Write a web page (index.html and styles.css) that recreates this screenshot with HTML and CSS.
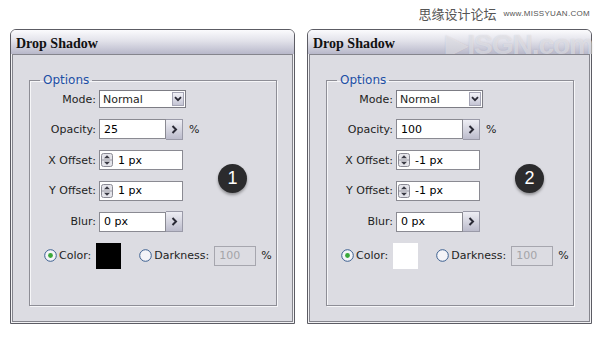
FILE: index.html
```html
<!DOCTYPE html>
<html lang="en">
<head>
    <meta charset="UTF-8">
    <title>Drop Shadow</title>
    <link rel="stylesheet" href="styles.css">
</head>
<body>
    <div class="site-mark">
        <span class="site-cn">思缘设计论坛</span>
        <span class="site-url">www.MISSYUAN.COM</span>
    </div>

    <div class="panels">
        <!-- panel 1 -->
        <div class="panel">
            <div class="title-bar">Drop Shadow</div>
            <div class="panel-body">
                <fieldset class="options">
                    <legend>Options</legend>
                    <div class="form-grid">
                        <span class="field-label">Mode:</span>
                        <div class="select">
                            <span class="select-value">Normal</span>
                            <span class="drop-btn">
                                <svg width="8" height="6" viewBox="0 0 8 6"><path d="M1 1.2 L4 4.2 L7 1.2" fill="none" stroke="#2a2a35" stroke-width="1.8"/></svg>
                            </span>
                        </div>

                        <span class="field-label">Opacity:</span>
                        <div class="field-line">
                            <div class="text-box short">25</div>
                            <span class="arrow-btn">
                                <svg width="7" height="9" viewBox="0 0 7 9"><path d="M1.5 1 L5 4.5 L1.5 8" fill="none" stroke="#2a2a35" stroke-width="2"/></svg>
                            </span>
                            <span class="unit">%</span>
                        </div>

                        <span class="field-label">X Offset:</span>
                        <div class="text-box wide">
                            <svg class="spinner" width="12" height="14" viewBox="0 0 12 14"><rect x="0.5" y="0.5" width="11" height="13" rx="2" fill="#e4e4ea" stroke="#8a8a94"/><line x1="1" y1="7" x2="11" y2="7" stroke="#9a9aa4"/><path d="M3 5.2 L6 2.2 L9 5.2 Z M3 8.8 L6 11.8 L9 8.8 Z" fill="#3a3a44"/></svg>
                            1 px
                        </div>

                        <span class="field-label">Y Offset:</span>
                        <div class="text-box wide">
                            <svg class="spinner" width="12" height="14" viewBox="0 0 12 14"><rect x="0.5" y="0.5" width="11" height="13" rx="2" fill="#e4e4ea" stroke="#8a8a94"/><line x1="1" y1="7" x2="11" y2="7" stroke="#9a9aa4"/><path d="M3 5.2 L6 2.2 L9 5.2 Z M3 8.8 L6 11.8 L9 8.8 Z" fill="#3a3a44"/></svg>
                            1 px
                        </div>

                        <span class="field-label">Blur:</span>
                        <div class="field-line">
                            <div class="text-box short">0 px</div>
                            <span class="arrow-btn">
                                <svg width="7" height="9" viewBox="0 0 7 9"><path d="M1.5 1 L5 4.5 L1.5 8" fill="none" stroke="#2a2a35" stroke-width="2"/></svg>
                            </span>
                        </div>

                        <div class="color-row">
                            <svg class="radio" width="13" height="13" viewBox="0 0 13 13"><circle cx="6.5" cy="6.5" r="5.8" fill="#f4f4f8" stroke="#3b5f8f"/><circle cx="6.5" cy="6.5" r="2.4" fill="#3aa83a"/></svg>
                            <span class="radio-label">Color:</span>
                            <span class="swatch black"></span>
                            <svg class="radio" width="13" height="13" viewBox="0 0 13 13"><circle cx="6.5" cy="6.5" r="5.8" fill="#f4f4f8" stroke="#3b5f8f"/></svg>
                            <span class="radio-label">Darkness:</span>
                            <div class="text-box disabled">100</div>
                            <span class="unit">%</span>
                        </div>
                    </div>
                </fieldset>
                <div class="badge">1</div>
            </div>
        </div>

        <!-- panel 2 -->
        <div class="panel">
            <div class="title-bar">Drop Shadow</div>
            <div class="watermark">▶ISGN.com</div>
            <div class="panel-body">
                <fieldset class="options">
                    <legend>Options</legend>
                    <div class="form-grid">
                        <span class="field-label">Mode:</span>
                        <div class="select">
                            <span class="select-value">Normal</span>
                            <span class="drop-btn">
                                <svg width="8" height="6" viewBox="0 0 8 6"><path d="M1 1.2 L4 4.2 L7 1.2" fill="none" stroke="#2a2a35" stroke-width="1.8"/></svg>
                            </span>
                        </div>

                        <span class="field-label">Opacity:</span>
                        <div class="field-line">
                            <div class="text-box short">100</div>
                            <span class="arrow-btn">
                                <svg width="7" height="9" viewBox="0 0 7 9"><path d="M1.5 1 L5 4.5 L1.5 8" fill="none" stroke="#2a2a35" stroke-width="2"/></svg>
                            </span>
                            <span class="unit">%</span>
                        </div>

                        <span class="field-label">X Offset:</span>
                        <div class="text-box wide">
                            <svg class="spinner" width="12" height="14" viewBox="0 0 12 14"><rect x="0.5" y="0.5" width="11" height="13" rx="2" fill="#e4e4ea" stroke="#8a8a94"/><line x1="1" y1="7" x2="11" y2="7" stroke="#9a9aa4"/><path d="M3 5.2 L6 2.2 L9 5.2 Z M3 8.8 L6 11.8 L9 8.8 Z" fill="#3a3a44"/></svg>
                            -1 px
                        </div>

                        <span class="field-label">Y Offset:</span>
                        <div class="text-box wide">
                            <svg class="spinner" width="12" height="14" viewBox="0 0 12 14"><rect x="0.5" y="0.5" width="11" height="13" rx="2" fill="#e4e4ea" stroke="#8a8a94"/><line x1="1" y1="7" x2="11" y2="7" stroke="#9a9aa4"/><path d="M3 5.2 L6 2.2 L9 5.2 Z M3 8.8 L6 11.8 L9 8.8 Z" fill="#3a3a44"/></svg>
                            -1 px
                        </div>

                        <span class="field-label">Blur:</span>
                        <div class="field-line">
                            <div class="text-box short">0 px</div>
                            <span class="arrow-btn">
                                <svg width="7" height="9" viewBox="0 0 7 9"><path d="M1.5 1 L5 4.5 L1.5 8" fill="none" stroke="#2a2a35" stroke-width="2"/></svg>
                            </span>
                        </div>

                        <div class="color-row">
                            <svg class="radio" width="13" height="13" viewBox="0 0 13 13"><circle cx="6.5" cy="6.5" r="5.8" fill="#f4f4f8" stroke="#3b5f8f"/><circle cx="6.5" cy="6.5" r="2.4" fill="#3aa83a"/></svg>
                            <span class="radio-label">Color:</span>
                            <span class="swatch white"></span>
                            <svg class="radio" width="13" height="13" viewBox="0 0 13 13"><circle cx="6.5" cy="6.5" r="5.8" fill="#f4f4f8" stroke="#3b5f8f"/></svg>
                            <span class="radio-label">Darkness:</span>
                            <div class="text-box disabled">100</div>
                            <span class="unit">%</span>
                        </div>
                    </div>
                </fieldset>
                <div class="badge">2</div>
            </div>
        </div>
    </div>
</body>
</html>
```

FILE: styles.css
```css
* {
    margin: 0;
    padding: 0;
    box-sizing: border-box;
}

body {
    width: 600px;
    height: 350px;
    background: #fff;
    font-family: 'DejaVu Sans', 'Liberation Sans', sans-serif;
    font-size: 11px;
    color: #1e1e22;
    overflow: hidden;
}

/* top-right site mark */
.site-mark {
    height: 29px;
    display: flex;
    justify-content: flex-end;
    align-items: center;
    gap: 7px;
    padding: 0 10px 2px 0;
    color: #555;
}

.site-cn {
    font-family: 'Noto Sans CJK SC', sans-serif;
    font-size: 13px;
}

.site-url {
    font-family: 'Liberation Sans', sans-serif;
    font-size: 8px;
    letter-spacing: 0.3px;
}

.panels {
    display: flex;
    gap: 12px;
    padding-left: 10px;
}

.panel {
    position: relative;
    width: 285px;
    height: 295px;
    display: flex;
    flex-direction: column;
    border: 1px solid #5c5c64;
    border-radius: 6px 6px 0 0;
    background: #f2f2f4;
}

.title-bar {
    height: 24px;
    padding: 7px 0 0 5px;
    line-height: 14px;
    border-radius: 5px 5px 0 0;
    background: linear-gradient(to bottom, #fbfbfd 0%, #e2e2ea 45%, #b8b8ca 100%);
    font-family: 'Liberation Serif', serif;
    font-weight: bold;
    font-size: 14px;
    color: #111;
}

.watermark {
    position: absolute;
    top: -2px;
    right: -2px;
    font-family: 'Liberation Sans', sans-serif;
    font-weight: bold;
    font-size: 28px;
    letter-spacing: -1px;
    color: rgba(255, 255, 255, 0.45);
    text-shadow: 0 0 1px rgba(120, 120, 140, 0.3);
}

.panel-body {
    position: relative;
    flex: 1;
    display: flex;
    flex-direction: column;
    margin: 0 1px 1px;
    padding: 18px 15px 15px 16px;
    border: 1px solid #85858d;
    background: #dcdce2;
}

.options {
    flex: 1;
    border: 1px solid #8e8e96;
    box-shadow: 1px 1px 0 #f6f6f8, inset 1px 1px 0 #f6f6f8;
    padding: 3px 0 0;
}

.options legend {
    margin-left: 10px;
    padding: 0 3px;
    line-height: 14px;
    font-size: 12px;
    color: #1d4fa6;
}

.form-grid {
    display: grid;
    grid-template-columns: 66px 1fr;
    column-gap: 3px;
    row-gap: 10.6px;
    align-items: center;
}

.field-label {
    text-align: right;
    white-space: nowrap;
}

.field-line {
    display: flex;
    align-items: center;
}

.select {
    width: 87px;
    height: 18px;
    display: flex;
    align-items: center;
    justify-content: space-between;
    border: 1px solid #7c7c84;
    background: #fff;
    padding: 1px 1px 1px 3px;
}

.drop-btn {
    width: 12px;
    height: 14px;
    display: flex;
    align-items: center;
    justify-content: center;
    border: 1px solid #a4a4b4;
    background: linear-gradient(to bottom, #f2f2f8, #c4c4d4);
}

.text-box {
    height: 20px;
    display: flex;
    align-items: center;
    gap: 5px;
    padding-left: 4px;
    border: 1px solid #8a8a92;
    background: #fff;
    color: #000;
    white-space: nowrap;
}

.text-box.short {
    width: 67px;
}

.text-box.wide {
    width: 84px;
    padding-left: 1px;
}

.text-box.disabled {
    width: 42px;
    border-color: #a6a6ae;
    background: #dcdce2;
    color: #a4a4a8;
}

.arrow-btn {
    width: 17px;
    height: 21px;
    display: flex;
    align-items: center;
    justify-content: center;
    border: 1px solid #9a9aa8;
    border-left: none;
    background: linear-gradient(to bottom, #eeeef4, #bcbccc);
}

.unit {
    margin-left: 6px;
}

.color-row {
    grid-column: 1 / -1;
    display: flex;
    align-items: center;
    padding-left: 14px;
}

.color-row .unit {
    margin-left: 5px;
}

.radio {
    flex-shrink: 0;
}

.radio-label {
    margin-left: 2px;
    margin-right: 5px;
}

.swatch {
    width: 25px;
    height: 26px;
    margin-right: 18px;
}

.swatch.black {
    background: #000;
}

.swatch.white {
    background: #fff;
}

.badge {
    position: absolute;
    left: 205px;
    top: 109px;
    width: 29px;
    height: 29px;
    border-radius: 50%;
    background: #2b2b2d;
    box-shadow: 0 2px 3px rgba(0, 0, 0, 0.35);
    color: #fff;
    font-family: 'Liberation Sans', sans-serif;
    font-size: 18px;
    display: flex;
    align-items: center;
    justify-content: center;
}
```
